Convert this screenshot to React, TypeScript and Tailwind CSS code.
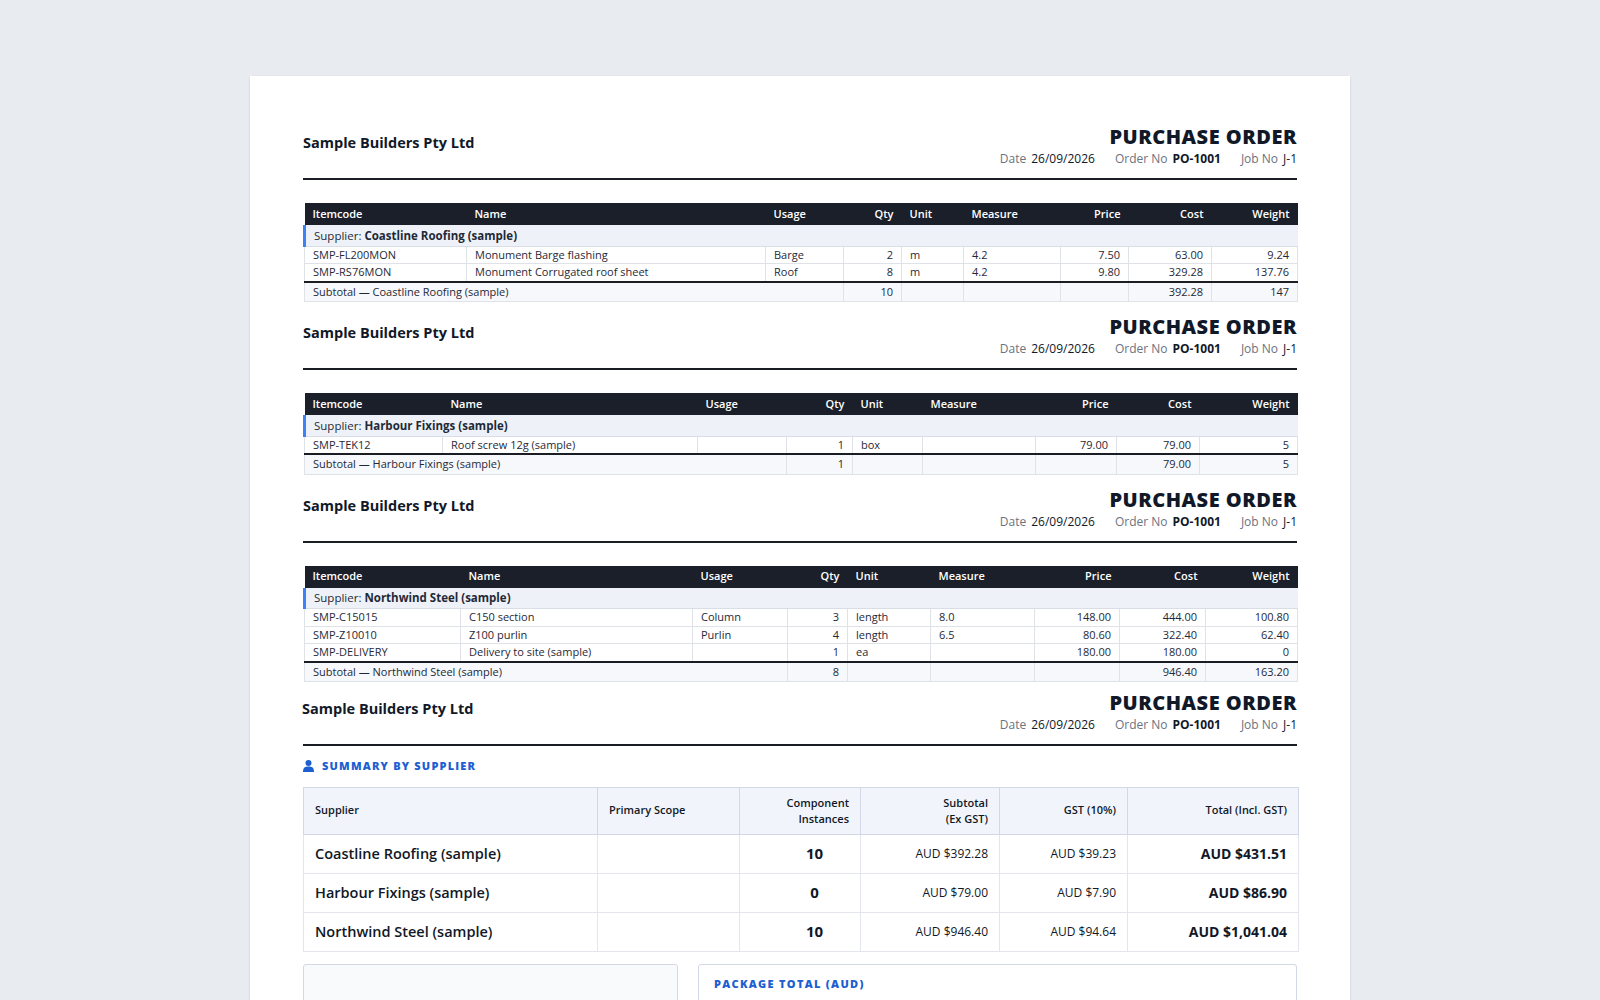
import React from "react";

type Row = string[];
const heads = ["Itemcode","Name","Usage","Qty","Unit","Measure","Price","Cost","Weight"];
const rightCols = [3,6,7,8];

function Header({ shift = false }: { shift?: boolean }) {
  return (
    <div>
      <div className="flex items-end justify-between pb-[10px] border-b-2 border-[#1a1d24]">
        <div className={`text-[14.5px] font-bold text-[#111827] pb-[14px] ${shift ? "-ml-[1px]" : ""}`}>Sample Builders Pty Ltd</div>
        <div className="flex flex-col items-end">
          <div className="text-[20px] font-extrabold tracking-[0.5px] leading-[22px] text-[#111827]">PURCHASE ORDER</div>
          <div className="text-[12px] mt-[2px] flex gap-[20px] text-[#111827]">
            <span><span className="text-[#6b7280] mr-[5px]">Date</span>26/09/2026</span>
            <span><span className="text-[#6b7280] mr-[5px]">Order No</span><b>PO-1001</b></span>
            <span><span className="text-[#6b7280] mr-[5px]">Job No</span>J-1</span>
          </div>
        </div>
      </div>
    </div>
  );
}

function POTable({ widths, supplier, rows, sub }: { widths: number[]; supplier: string; rows: Row[]; sub: Row }) {
  return (
    <table className="w-full border-collapse table-fixed text-[11px] text-[#1f2937] mt-[23px]">
      <colgroup>{widths.map((w, i) => <col key={i} style={{ width: w }} />)}</colgroup>
      <thead>
        <tr className="bg-[#1b1f2a] text-white h-[22px]">
          {heads.map((h, i) => (
            <th key={h} className={`font-semibold px-[8px] ${rightCols.includes(i) ? "text-right" : "text-left"}`}>{h}</th>
          ))}
        </tr>
      </thead>
      <tbody>
        <tr className="bg-[#eef2f8] h-[21px]">
          <td colSpan={9} className="px-[8px] text-[11.5px] border-l-[3px] border-[#3b82f6] border-b border-b-[#d9dee6]">Supplier: <b>{supplier}</b></td>
        </tr>
        {rows.map((r, ri) => (
          <tr key={ri} className="h-[17.5px]">
            {r.map((c, i) => (
              <td key={i} className={`px-[8px] border border-[#dfe3e8] ${i===0?"border-l-[#dfe3e8]":""} ${rightCols.includes(i) ? "text-right" : ""} ${ri===rows.length-1?"border-b-2 border-b-[#1a1d24]":""}`}>{c}</td>
            ))}
          </tr>
        ))}
        <tr className="h-[20px] bg-[#f6f8fb]">
          <td colSpan={3} className="px-[8px] border border-[#dfe3e8]">{sub[0]}</td>
          {sub.slice(1).map((c, i) => (
            <td key={i} className={`px-[8px] border border-[#dfe3e8] ${rightCols.includes(i+3) ? "text-right" : ""}`}>{c}</td>
          ))}
        </tr>
      </tbody>
    </table>
  );
}

function UserIcon() {
  return (
    <svg width="11" height="12" viewBox="0 0 11 12" fill="#1d5fd1"><circle cx="5.5" cy="3" r="3"/><path d="M0 12 C0 7.5 2 6.5 5.5 6.5 C9 6.5 11 7.5 11 12 Z"/></svg>
  );
}

export default function App() {
  const sumRows = [
    ["Coastline Roofing (sample)","10","AUD $392.28","AUD $39.23","AUD $431.51"],
    ["Harbour Fixings (sample)","0","AUD $79.00","AUD $7.90","AUD $86.90"],
    ["Northwind Steel (sample)","10","AUD $946.40","AUD $94.64","AUD $1,041.04"],
  ];
  return (
    <div className="min-h-[1000px] bg-[#e8ecf1] pt-[76px] overflow-hidden h-[1000px]" style={{ fontFamily: '"Open Sans", "Noto Sans", sans-serif' }}>
      <div className="mx-auto w-[1100px] bg-white px-[53px] pt-[50px] pb-[40px] shadow-sm">
        <Header />
        <POTable widths={[162,299,78,58,62,97,68,83,86]} supplier="Coastline Roofing (sample)"
          rows={[["SMP-FL200MON","Monument Barge flashing","Barge","2","m","4.2","7.50","63.00","9.24"],["SMP-RS76MON","Monument Corrugated roof sheet","Roof","8","m","4.2","9.80","329.28","137.76"]]}
          sub={["Subtotal — Coastline Roofing (sample)","10","","","","392.28","147"]} />
        <div className="mt-[14px]"><Header /></div>
        <POTable widths={[138,255,89,66,70,113,81,83,98]} supplier="Harbour Fixings (sample)"
          rows={[["SMP-TEK12","Roof screw 12g (sample)","","1","box","","79.00","79.00","5"]]}
          sub={["Subtotal — Harbour Fixings (sample)","1","","","","79.00","5"]} />
        <div className="mt-[14px]"><Header /></div>
        <POTable widths={[156,232,95,60,83,104,85,86,92]} supplier="Northwind Steel (sample)"
          rows={[["SMP-C15015","C150 section","Column","3","length","8.0","148.00","444.00","100.80"],["SMP-Z10010","Z100 purlin","Purlin","4","length","6.5","80.60","322.40","62.40"],["SMP-DELIVERY","Delivery to site (sample)","","1","ea","","180.00","180.00","0"]]}
          sub={["Subtotal — Northwind Steel (sample)","8","","","","946.40","163.20"]} />
        <div className="mt-[10px]"><Header shift /></div>
        <div className="mt-[12px] flex items-center gap-[8px] text-[11px] font-extrabold tracking-[1.2px] text-[#1d5fd1]"><UserIcon />SUMMARY BY SUPPLIER</div>
        <table className="w-full mt-[12px] border-collapse table-fixed text-[#111827]">
          <colgroup>{[294,142,121,139,128,171].map((w,i)=><col key={i} style={{width:w}}/>)}</colgroup>
          <thead>
            <tr className="bg-[#f1f5fb] h-[47px] text-[11px] font-semibold">
              <th className="text-left px-[11px] border border-[#d3d8e6] font-semibold">Supplier</th>
              <th className="text-left px-[11px] border border-[#d3d8e6] font-semibold">Primary Scope</th>
              <th className="text-right px-[11px] border border-[#d3d8e6] font-semibold leading-[16px]">Component<br/>Instances</th>
              <th className="text-right px-[11px] border border-[#d3d8e6] font-semibold leading-[16px]">Subtotal<br/>(Ex GST)</th>
              <th className="text-right px-[11px] border border-[#d3d8e6] font-semibold">GST (10%)</th>
              <th className="text-right px-[11px] border border-[#d3d8e6] font-semibold">Total (Incl. GST)</th>
            </tr>
          </thead>
          <tbody>
            {sumRows.map((r) => (
              <tr key={r[0]} className="h-[39px]">
                <td className="px-[11px] border border-[#e3e6ec] text-[14.5px] font-semibold">{r[0]}</td>
                <td className="border border-[#e3e6ec]"></td>
                <td className="px-[11px] border border-[#e3e6ec] text-center text-[15px] font-bold pl-[40px]">{r[1]}</td>
                <td className="px-[11px] border border-[#e3e6ec] text-right text-[12px]">{r[2]}</td>
                <td className="px-[11px] border border-[#e3e6ec] text-right text-[12px]">{r[3]}</td>
                <td className="px-[11px] border border-[#e3e6ec] text-right text-[14px] font-bold">{r[4]}</td>
              </tr>
            ))}
          </tbody>
        </table>
        <div className="mt-[12px] flex gap-[20px]">
          <div className="w-[375px] h-[80px] border border-[#d3d8e6] rounded-[3px] bg-[#f9fafc]"></div>
          <div className="flex-1 h-[80px] border border-[#d3d8e6] rounded-[3px] px-[15px] pt-[11px] text-[11px] font-extrabold tracking-[1.3px] text-[#1d5fd1]">PACKAGE TOTAL (AUD)</div>
        </div>
      </div>
    </div>
  );
}
